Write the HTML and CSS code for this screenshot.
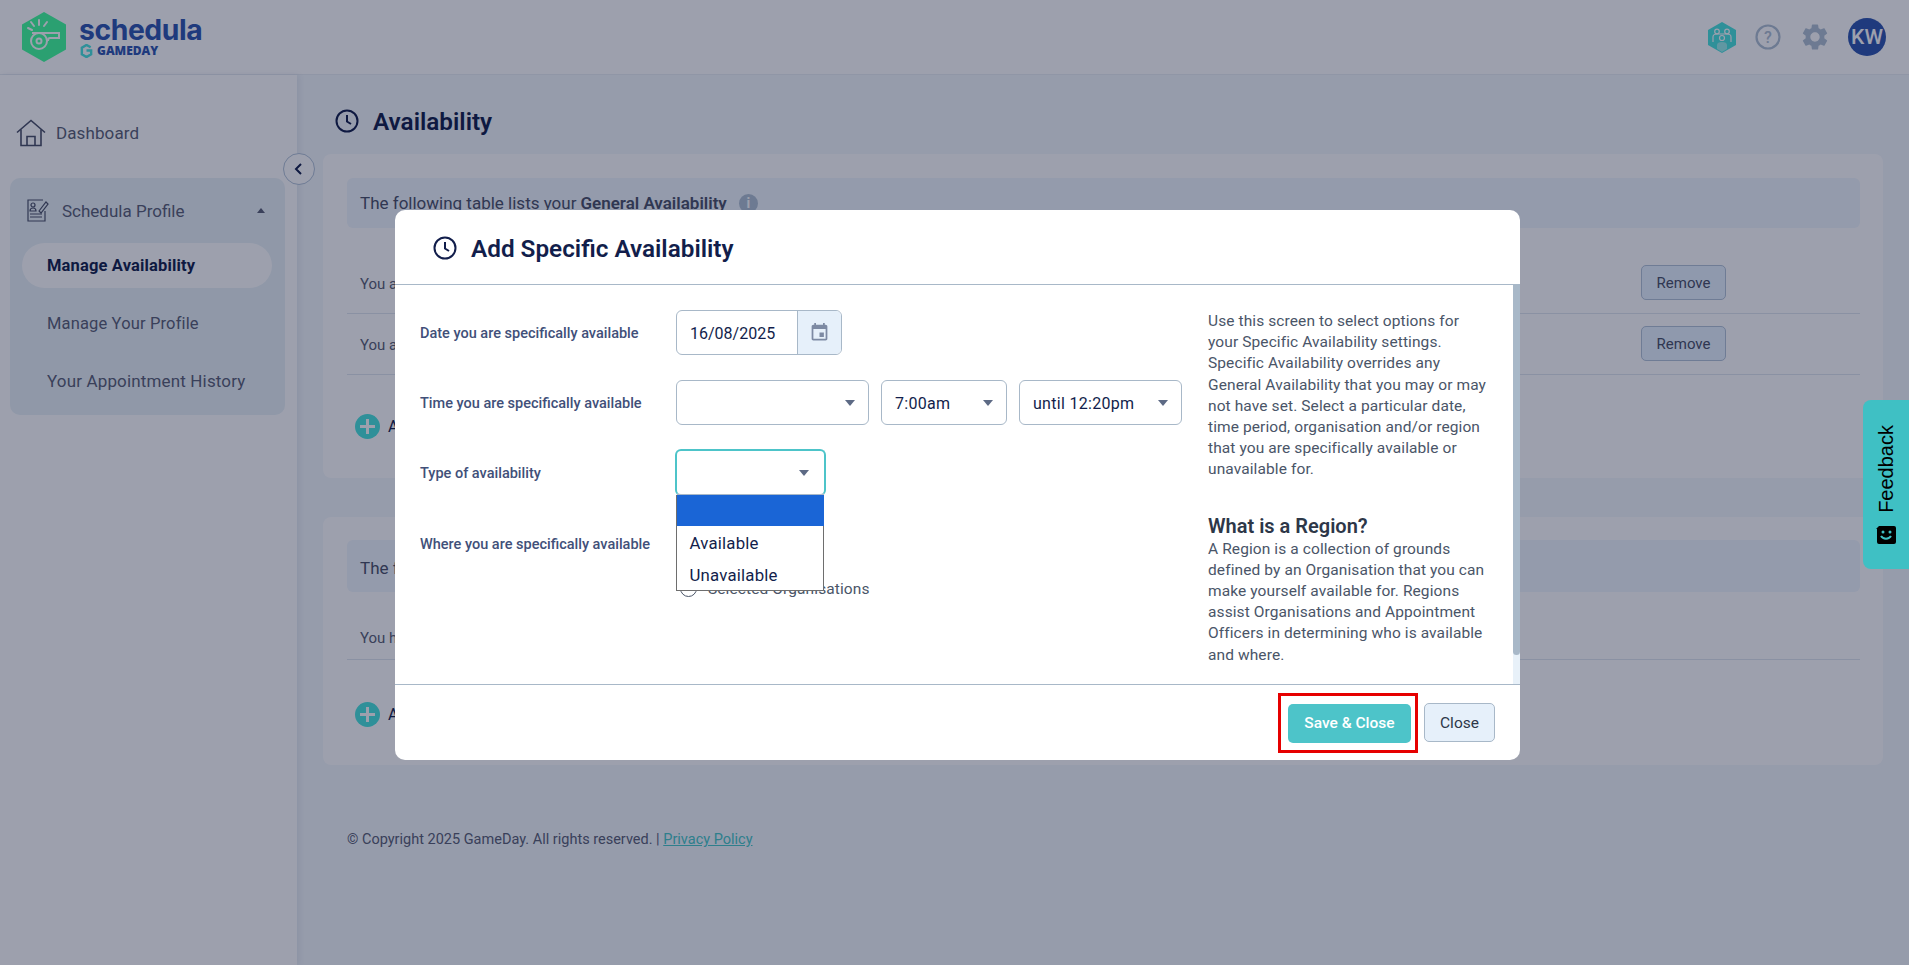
FILE: index.html
```html
<!DOCTYPE html>
<html lang="en">
<head>
  <meta charset="UTF-8" />
  <title>Schedula - Availability</title>
  <link rel="stylesheet" href="styles.css">
</head>
<body>

  <header class="topbar">
    <div class="logo">
      <svg class="logo-hex" viewBox="0 0 44 50">
        <polygon points="22,0 44,12.5 44,37.5 22,50 0,37.5 0,12.5" fill="#41ff9c"/>
        <g fill="none" stroke="#fff" stroke-width="2">
          <circle cx="17" cy="29" r="8"/>
          <circle cx="17" cy="29" r="2.5"/>
          <path d="M10 21h27v5h-9c-1 0-2 1-2 3"/>
          <path d="M17 8v5M9 10l3 4M25 10l-3 4M6 16l4 2" stroke-linecap="round"/>
        </g>
      </svg>
      <div class="logo-text">
        <span class="logo-name">schedula</span>
        <span class="logo-sub">
          <svg class="logo-g" viewBox="0 0 14 15">
            <path d="M11.5 3.5 7 1 2 4v7l5 3 5-3V7H7" fill="none" stroke="#48e4de" stroke-width="2.6"/>
          </svg>
          <b>GAMEDAY</b>
        </span>
      </div>
    </div>
    <div class="top-icons">
      <svg class="ico-team" viewBox="0 0 28 31">
        <polygon points="14,0 28,8 28,23 14,31 0,23 0,8" fill="#48e4de"/>
        <g fill="none" stroke="#fff" stroke-width="1.2">
          <circle cx="9" cy="9.500" r="2.300"/>
          <circle cx="19" cy="9.500" r="2.300"/>
          <path d="M5 20v-5c0-2 1.500-3 4-3h10c2.500 0 4 1 4 3v5"/>
          <circle cx="14" cy="16" r="2.500"/>
        </g>
        <path d="M9 27v-4c0-2 2-3 5-3s5 1 5 3v4l-5 3z" fill="#fff" opacity=".45"/>
      </svg>
      <svg class="ico-help" viewBox="0 0 26 26">
        <circle cx="13" cy="13" r="11.500" fill="none" stroke="#afc0d2" stroke-width="2.200"/>
        <text x="13" y="18.500" text-anchor="middle" class="help-mark">?</text>
      </svg>
      <svg class="ico-gear" viewBox="2 2 20 20">
        <path fill="#afc0d2" d="M19.14,12.94c0.04-0.3,0.06-0.61,0.06-0.94c0-0.32-0.02-0.64-0.07-0.94l2.03-1.58c0.18-0.14,0.23-0.41,0.12-0.61 l-1.92-3.32c-0.12-0.22-0.37-0.29-0.59-0.22l-2.39,0.96c-0.5-0.38-1.03-0.7-1.62-0.94L14.4,2.81c-0.04-0.24-0.24-0.41-0.48-0.41 h-3.84c-0.24,0-0.43,0.17-0.47,0.41L9.25,5.35C8.66,5.59,8.12,5.92,7.63,6.29L5.24,5.33c-0.22-0.08-0.47,0-0.59,0.22L2.74,8.87 C2.62,9.08,2.66,9.34,2.86,9.48l2.03,1.58C4.84,11.36,4.8,11.69,4.8,12s0.02,0.64,0.07,0.94l-2.03,1.58 c-0.18,0.14-0.23,0.41-0.12,0.61l1.92,3.32c0.12,0.22,0.37,0.29,0.59,0.22l2.39-0.96c0.5,0.38,1.03,0.7,1.62,0.94l0.36,2.54 c0.05,0.24,0.24,0.41,0.48,0.41h3.84c0.24,0,0.44-0.17,0.47-0.41l0.36-2.54c0.59-0.24,1.13-0.56,1.62-0.94l2.39,0.96 c0.22,0.08,0.47,0,0.59-0.22l1.92-3.32c0.12-0.22,0.07-0.47-0.12-0.61L19.14,12.94z M12,15.6c-1.98,0-3.6-1.62-3.6-3.6 s1.62-3.6,3.6-3.6s3.6,1.62,3.6,3.6S13.98,15.6,12,15.6z"/>
      </svg>
      <div class="avatar">KW</div>
    </div>
  </header>

  <div class="layout">
    <aside class="sidebar">
      <div class="nav-top">
        <svg class="ico-home" viewBox="0 0 30 27">
          <g fill="none" stroke="#4a5068" stroke-width="1.600">
            <path d="M1 13 15 1l14 12"/>
            <path d="M5 10v16h20V10"/>
            <path d="M11 26v-9h8v9"/>
          </g>
        </svg>
        <span>Dashboard</span>
      </div>
      <div class="nav-panel">
        <div class="nav-head">
          <svg class="ico-profile" viewBox="0 0 22 23">
            <g fill="none" stroke="#4a5068" stroke-width="1.200">
              <path d="M16 1H1v21h17V12"/>
              <circle cx="6" cy="6" r="2"/>
              <path d="M3 12c0-4 6-4 6 0zM3 15h12M3 18h12"/>
              <path d="M12 12 19 3l2 2-7 9z"/>
            </g>
          </svg>
          <span>Schedula Profile</span>
          <i class="caret-up"></i>
        </div>
        <a class="nav-item active">Manage Availability</a>
        <a class="nav-item">Manage Your Profile</a>
        <a class="nav-item">Your Appointment History</a>
      </div>
      <button class="collapse">
        <svg viewBox="0 0 10 14"><path d="M7 2 2 7l5 5" fill="none" stroke="#121e4b" stroke-width="2"/></svg>
      </button>
    </aside>

    <main class="content">
      <h1 class="page-title">
        <svg class="ico-clock" viewBox="0 0 24 24">
          <circle cx="12" cy="12" r="10.500" fill="none" stroke="currentColor" stroke-width="2"/>
          <path d="M12 6v6.500l4 2.500" fill="none" stroke="currentColor" stroke-width="2"/>
        </svg>
        Availability
      </h1>

      <section class="card">
        <div class="card-head">
          The following table lists your <b>General Availability</b>
          <i class="info">i</i>
        </div>
        <div class="row">
          <span>You are available</span>
          <button class="btn-remove">Remove</button>
        </div>
        <div class="row">
          <span>You are available</span>
          <button class="btn-remove">Remove</button>
        </div>
        <div class="add-row"><i class="plus"></i><span>Add</span></div>
      </section>

      <section class="card card-second">
        <div class="card-head">The following table lists your <b>Specific Availability</b></div>
        <div class="row row-short"><span>You have none</span></div>
        <div class="add-row"><i class="plus"></i><span>Add</span></div>
      </section>

      <p class="copyright">© Copyright 2025 GameDay. All rights reserved. | <a>Privacy Policy</a></p>
    </main>
  </div>

  <div class="backdrop">
    <div class="modal">
      <div class="modal-head">
        <svg class="ico-clock" viewBox="0 0 24 24">
          <circle cx="12" cy="12" r="10.500" fill="none" stroke="currentColor" stroke-width="2"/>
          <path d="M12 6v6.500l4 2.500" fill="none" stroke="currentColor" stroke-width="2"/>
        </svg>
        <h2>Add Specific Availability</h2>
      </div>

      <div class="modal-body">
        <div class="form">
          <div class="form-row">
            <label>Date you are specifically available</label>
            <div class="date-input">
              <span>16/08/2025</span>
              <div class="date-addon">
                <svg viewBox="0 0 24 24"><path fill="#7d8aa3" d="M17 12h-5v5h5v-5zM16 1v2H8V1H6v2H5c-1.110 0-1.990.9-1.990 2L3 19c0 1.100.89 2 2 2h14c1.100 0 2-.9 2-2V5c0-1.100-.9-2-2-2h-1V1h-2zm3 18H5V8h14v11z"/></svg>
              </div>
            </div>
          </div>
          <div class="form-row">
            <label>Time you are specifically available</label>
            <div class="select sel-date"><i class="caret"></i></div>
            <div class="select sel-from"><span>7:00am</span><i class="caret"></i></div>
            <div class="select sel-until"><span>until 12:20pm</span><i class="caret"></i></div>
          </div>
          <div class="form-row">
            <label>Type of availability</label>
            <div class="select sel-type">
              <i class="caret"></i>
              <ul class="dropdown">
                <li class="selected">&nbsp;</li>
                <li>Available</li>
                <li>Unavailable</li>
              </ul>
            </div>
          </div>
          <div class="form-row form-row-top">
            <label>Where you are specifically available</label>
            <div class="radios">
              <div class="radio radio-hidden"><i></i></div>
              <div class="radio"><i></i><span>Selected Organisations</span></div>
            </div>
          </div>
        </div>

        <div class="help">
          <p>Use this screen to select options for your Specific Availability settings. Specific Availability overrides any General Availability that you may or may not have set. Select a particular date, time period, organisation and/or region that you are specifically available or unavailable for.</p>
          <h3>What is a Region?</h3>
          <p>A Region is a collection of grounds defined by an Organisation that you can make yourself available for. Regions assist Organisations and Appointment Officers in determining who is available and where.</p>
        </div>

        <div class="scrollbar"><div class="thumb"></div></div>
      </div>

      <div class="modal-foot">
        <div class="highlight"><button class="btn-save">Save &amp; Close</button></div>
        <button class="btn-close">Close</button>
      </div>
    </div>
  </div>

  <div class="feedback">
    <span>Feedback</span>
    <svg viewBox="0 0 20 18">
      <path d="M0 3 3 0v0h15a2 2 0 0 1 2 2v14a2 2 0 0 1-2 2H3a2 2 0 0 1-2-2V3z" fill="#000"/>
      <circle cx="7" cy="6" r="1.500" fill="#3fc0c4"/>
      <circle cx="14" cy="6" r="1.500" fill="#3fc0c4"/>
      <path d="M5 10c2 3.500 8 3.500 10 0" fill="none" stroke="#3fc0c4" stroke-width="2"/>
    </svg>
  </div>

</body>
</html>
```

FILE: styles.css
```css
* {
  box-sizing: border-box;
}
body {
  margin: 0;
  height: 965px;
  overflow: hidden;
  font-family: Roboto, "Liberation Sans", sans-serif;
  background: #f3f8fc;
  color: #5a5f75;
}
button {
  font-family: inherit;
}

/* top bar */
.topbar {
  height: 75px;
  display: flex;
  align-items: center;
  justify-content: space-between;
  padding: 0 23px 0 22px;
  background: #fff;
  border-bottom: 1px solid #e9eef3;
}
.logo {
  display: flex;
  align-items: center;
  gap: 13px;
}
.logo-hex {
  width: 44px;
  height: 50px;
}
.logo-text {
  display: flex;
  flex-direction: column;
  margin-top: 0;
}
.logo-name {
  font-family: Inter, sans-serif;
  font-size: 28.300px;
  line-height: 28px;
  font-weight: 700;
  color: #2d55af;
  letter-spacing: -0.4px;
}
.logo-sub {
  display: flex;
  align-items: center;
  gap: 4px;
  margin-left: 1px;
}
.logo-g {
  width: 13px;
  height: 14px;
}
.logo-sub b {
  font-family: "Open Sans", sans-serif;
  font-size: 12px;
  line-height: 14px;
  font-weight: 800;
  color: #2d55af;
}
.top-icons {
  display: flex;
  align-items: center;
}
.ico-team {
  width: 28px;
  height: 31px;
}
.ico-help {
  width: 26px;
  height: 26px;
  margin-left: 19px;
}
.help-mark {
  font-family: Roboto, sans-serif;
  font-size: 16px;
  font-weight: 500;
  fill: #afc0d2;
}
.ico-gear {
  width: 26px;
  height: 26px;
  margin-left: 21px;
}
.avatar {
  width: 38px;
  height: 38px;
  margin-left: 20px;
  border-radius: 50%;
  background: #2d55af;
  color: #fff;
  font-size: 21px;
  font-weight: 500;
  line-height: 38px;
  text-align: center;
}

/* page */
.layout {
  display: flex;
  height: 890px;
}
.sidebar {
  position: relative;
  width: 297px;
  flex: none;
  padding-top: 43px;
  background: #fff;
  box-shadow: 2px 0 6px rgba(20, 40, 80, 0.08);
}
.nav-top {
  display: flex;
  align-items: center;
  gap: 10px;
  height: 30px;
  margin-bottom: 30px;
  padding-left: 16px;
  font-size: 17px;
  letter-spacing: 0.1px;
}
.ico-home {
  width: 30px;
  height: 28px;
}
.nav-panel {
  margin: 0 12px 0 10px;
  padding: 10px 13px 12px 12px;
  border-radius: 10px;
  background: #e9f2f7;
  display: flex;
  flex-direction: column;
  gap: 12.5px;
}
.nav-head {
  display: flex;
  align-items: center;
  height: 45px;
  margin-bottom: -2.500px;
  padding-left: 5px;
  font-size: 17px;
}
.ico-profile {
  width: 22px;
  height: 23px;
  margin-right: 13px;
}
.caret-up {
  margin-left: auto;
  margin-right: 7px;
  border: 4px solid transparent;
  border-top: 0;
  border-bottom: 5px solid #5a5f75;
}
.nav-item {
  height: 45px;
  line-height: 46px;
  padding-left: 25px;
  border-radius: 23px;
  font-size: 16.500px;
  letter-spacing: 0.15px;
}
.nav-item:last-child {
  font-size: 17px;
}
.nav-item.active {
  background: #fff;
  color: #121e4b;
  font-weight: 700;
}
.collapse {
  position: absolute;
  left: 283px;
  top: 78px;
  width: 32px;
  height: 32px;
  padding: 0;
  border-radius: 50%;
  border: 1px solid #b2c3d7;
  background: #fff;
  display: flex;
  align-items: center;
  justify-content: center;
}
.collapse svg {
  width: 10px;
  height: 14px;
}
.content {
  flex: 1;
  padding: 33px 26px 0 26px;
}
.page-title {
  display: flex;
  align-items: center;
  gap: 14px;
  height: 26px;
  margin: 0 0 20px 12px;
  font-size: 24.300px;
  font-weight: 600;
  color: #121e4b;
}
.ico-clock {
  width: 24px;
  height: 24px;
  color: #121e4b;
}
.card {
  height: 324px;
  padding: 24px 23px 0 24px;
  border-radius: 8px;
  background: #fff;
}
.card-second {
  height: 248px;
  margin-top: 39px;
  padding-top: 23px;
}
.card-head {
  display: flex;
  align-items: center;
  gap: 4px;
  height: 50px;
  margin-bottom: 25px;
  padding-left: 13px;
  border-radius: 6px;
  background: #f0f7fd;
  font-size: 17px;
  color: #4a5068;
}
.card-second .card-head {
  height: 52px;
  margin-bottom: 23px;
  padding-top: 3px;
}
.card-head b {
  font-weight: 600;
}
.info {
  width: 19px;
  height: 19px;
  margin-left: 8px;
  border-radius: 50%;
  background: #afc0d2;
  color: #fff;
  font-size: 14px;
  font-style: normal;
  font-weight: 700;
  line-height: 19px;
  text-align: center;
}
.row {
  display: flex;
  align-items: center;
  justify-content: space-between;
  height: 61px;
  padding: 0 134px 0 13px;
  border-bottom: 1px solid #dfe6ee;
  font-size: 15px;
}
.row > span {
  padding-top: 2px;
}
.row-short {
  height: 45px;
}
.btn-remove {
  width: 85px;
  height: 35px;
  margin-top: -2px;
  padding: 2px 0 0;
  border: 1px solid #b2c3d7;
  border-radius: 5px;
  background: #e8f4ff;
  color: #4a5068;
  font-size: 15px;
}
.add-row {
  display: flex;
  align-items: center;
  gap: 8px;
  margin-top: 39px;
  padding-left: 8px;
  font-size: 16px;
  color: #121e4b;
}
.card-second .add-row {
  margin-top: 42px;
}
.plus {
  position: relative;
  width: 25px;
  height: 25px;
  border-radius: 50%;
  background: #48e4de;
}
.plus::before,
.plus::after {
  content: "";
  position: absolute;
  background: #fff;
  left: 5px;
  right: 5px;
  top: 11px;
  bottom: 11px;
}
.plus::after {
  left: 11px;
  right: 11px;
  top: 5px;
  bottom: 5px;
}
.copyright {
  margin: 66px 0 0 24px;
  font-size: 14.500px;
  line-height: 18px;
  color: #5a5f75;
}
.copyright a {
  color: #46c8c8;
  text-decoration: underline;
}

/* modal */
.backdrop {
  position: absolute;
  inset: 0;
  background: rgba(10, 18, 49, 0.4);
  padding: 210px 389px 0 395px;
}
.modal {
  height: 550px;
  border-radius: 10px;
  background: #fff;
  overflow: hidden;
}
.modal-head {
  display: flex;
  align-items: center;
  gap: 14px;
  height: 75px;
  padding: 1px 0 0 38px;
  border-bottom: 1px solid #a8b8c8;
}
.modal-head h2 {
  margin: 0;
  padding-top: 2px;
  font-size: 24.300px;
  font-weight: 600;
  color: #121e4b;
}
.modal-body {
  position: relative;
  display: flex;
  height: 399px;
  overflow: hidden;
  padding: 25px 0 0 25px;
}
.form {
  width: 763px;
  flex: none;
}
.form-row {
  display: flex;
  align-items: center;
  height: 45px;
  margin-bottom: 25px;
}
.form-row-top {
  align-items: flex-start;
}
.form-row label {
  width: 256px;
  flex: none;
  padding-top: 2px;
  font-size: 14.500px;
  color: #415079;
  font-weight: 500;
}
.form-row-top label {
  line-height: 45px;
}
.date-input {
  display: flex;
  align-items: stretch;
  width: 166px;
  height: 45px;
  border: 1px solid #a8b8c8;
  border-radius: 6px;
  overflow: hidden;
  font-size: 16px;
  color: #121e4b;
}
.date-input span {
  flex: 1;
  padding-left: 13px;
  line-height: 46px;
}
.date-addon {
  width: 44px;
  display: flex;
  align-items: center;
  justify-content: center;
  background: #e6f0fa;
  border-left: 1px solid #a8b8c8;
}
.date-addon svg {
  width: 21px;
  height: 21px;
}
.select {
  position: relative;
  height: 45px;
  border: 1px solid #a8b8c8;
  border-radius: 6px;
  padding-left: 13px;
  font-size: 16px;
  letter-spacing: 0.3px;
  line-height: 45px;
  color: #121e4b;
  background: #fff;
}
.caret {
  position: absolute;
  right: 13px;
  top: 19px;
  border: 5px solid transparent;
  border-bottom: 0;
  border-top: 6px solid #5d6a85;
}
.sel-date {
  width: 193px;
}
.sel-from {
  width: 126px;
  margin-left: 12px;
}
.sel-until {
  width: 163px;
  margin-left: 12px;
}
.sel-type {
  width: 151px;
  height: 47px;
  margin-left: -1px;
  border: 2.500px solid #4dc4c9;
  border-bottom-color: #a8b8c8;
}
.sel-type .caret {
  right: 15px;
  top: 19px;
}
.dropdown {
  position: absolute;
  left: -1.500px;
  top: 43.500px;
  width: 148px;
  height: 96px;
  margin: 0;
  padding: 0;
  list-style: none;
  background: #fff;
  border: 1px solid #6e6e6e;
  border-top: 0;
  z-index: 1;
}
.dropdown li {
  height: 32px;
  padding-left: 13px;
  font-size: 16.800px;
  letter-spacing: 0.2px;
  line-height: 35px;
  color: #121e4b;
}
.dropdown li.selected {
  height: 31px;
  margin: 0 -1px 0 0;
  background: #1a65d6;
}
.radios {
  padding-top: 11px;
}
.radio {
  display: flex;
  align-items: center;
  gap: 11px;
  height: 23px;
  margin-bottom: 23px;
  padding-left: 4px;
  font-size: 15.500px;
  letter-spacing: 0.1px;
  color: #4a5568;
}
.radio i {
  width: 17px;
  height: 17px;
  border: 1px solid #4a5568;
  border-radius: 50%;
}
.help {
  width: 281px;
  flex: none;
  margin-left: 25px;
  padding-top: 1px;
  font-size: 15.500px;
  letter-spacing: 0.1px;
  line-height: 21.200px;
  color: #4a5568;
}
.help p {
  margin: 0;
}
.help h3 {
  margin: 33px 0 1px;
  font-size: 20px;
  line-height: 24px;
  letter-spacing: 0;
  font-weight: 600;
  color: #2d3748;
}
.scrollbar {
  position: absolute;
  right: 0;
  top: 0;
  bottom: 0;
  width: 7px;
  background: #e8f1f9;
}
.thumb {
  height: 370px;
  border-radius: 0 0 4px 4px;
  background: #a8b8c8;
}
.modal-foot {
  display: flex;
  align-items: center;
  justify-content: flex-end;
  height: 76px;
  padding-right: 25px;
  border-top: 1px solid #a8b8c8;
  gap: 6px;
}
.highlight {
  width: 140px;
  height: 60px;
  padding: 8px;
  border: 3px solid #e60000;
}
.btn-save {
  width: 123px;
  height: 39px;
  padding: 0;
  margin-left: -1px;
  border: 0;
  border-radius: 5px;
  background: #4dc4c9;
  color: #fff;
  font-size: 15.500px;
  font-weight: 500;
}
.btn-close {
  width: 71px;
  height: 39px;
  padding: 0;
  border: 1px solid #a8b8c8;
  border-radius: 5px;
  background: #e6f0fa;
  color: #2d3748;
  font-size: 15.500px;
}

/* feedback tab */
.feedback {
  position: absolute;
  right: 0;
  top: 400px;
  width: 46px;
  height: 169px;
  border-radius: 8px 0 0 8px;
  background: #3fc0c4;
  color: #000;
  display: flex;
  flex-direction: column;
  align-items: center;
  justify-content: flex-end;
  padding-bottom: 25px;
  gap: 13px;
}
.feedback span {
  writing-mode: vertical-rl;
  transform: rotate(180deg);
  font-family: "Liberation Sans", sans-serif;
  font-size: 20px;
  line-height: 24px;
}
.feedback svg {
  width: 20px;
  height: 18px;
}
```
